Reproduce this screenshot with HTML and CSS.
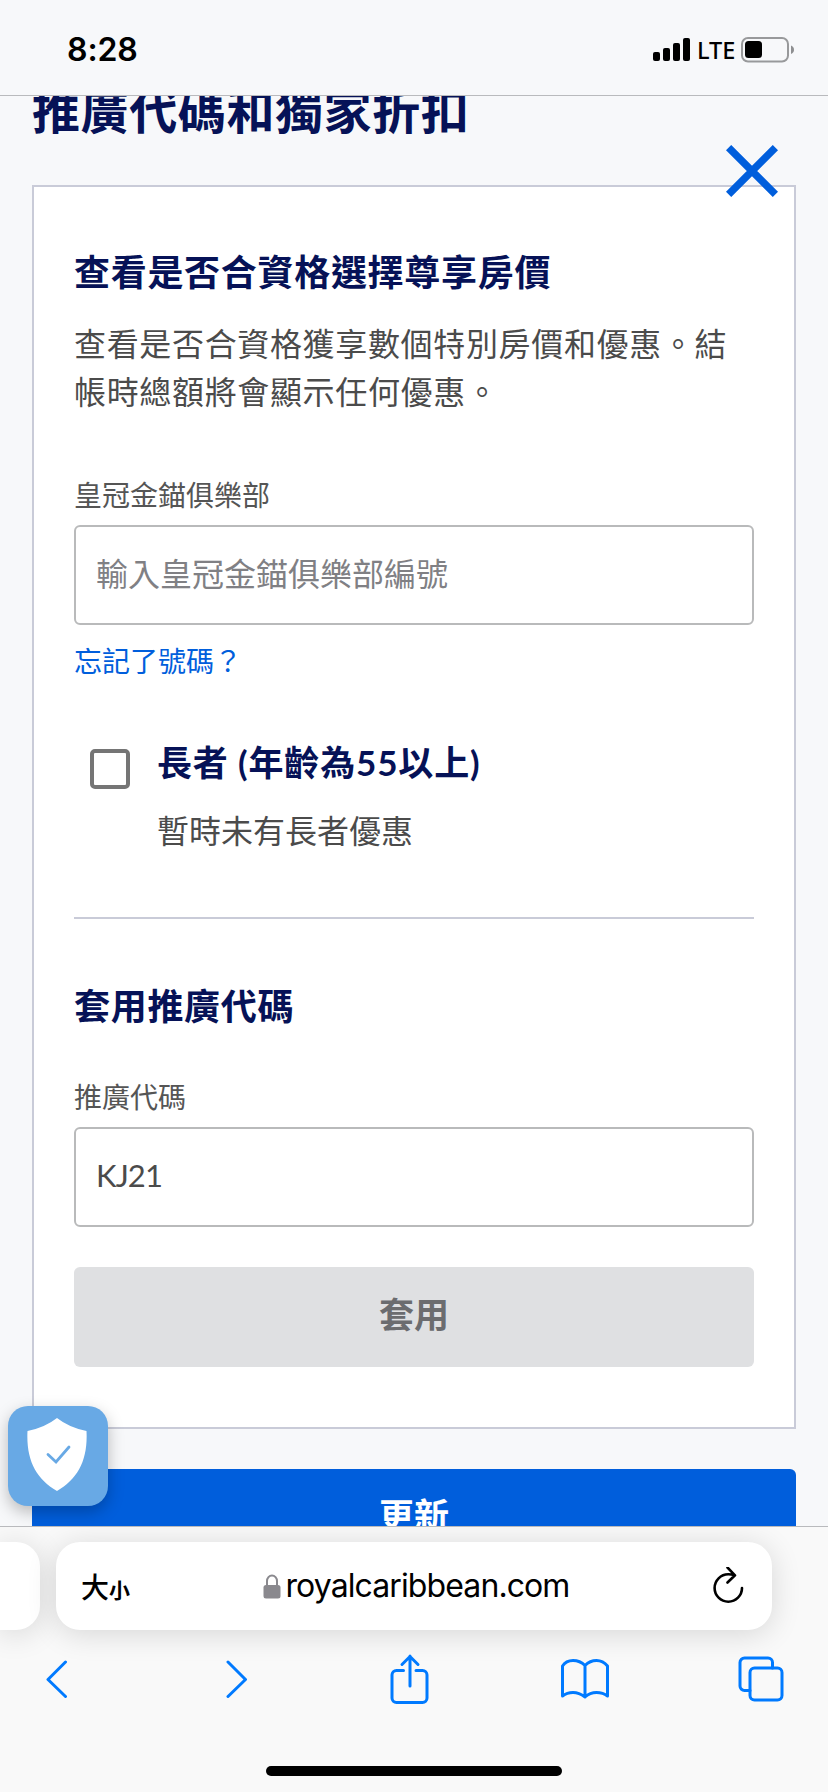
FILE: index.html
```html
<!DOCTYPE html>
<html lang="zh-Hant">
<head>
<meta charset="utf-8">
<title>推廣代碼和獨家折扣</title>
<link rel="stylesheet" href="styles.css">
</head>
<body>
<div class="screen">
  <header class="status">
    <span class="time">8:28</span>
    <div class="indicators">
      <svg class="signal" width="38" height="24" viewBox="0 0 38 24"><rect x="0" y="14" width="7" height="9" rx="2"/><rect x="10" y="10" width="7" height="13" rx="2"/><rect x="20" y="5" width="7" height="18" rx="2"/><rect x="30" y="0" width="7" height="23" rx="2"/></svg>
      <span class="network">LTE</span>
      <svg class="battery" width="54" height="26" viewBox="0 0 54 26"><rect x="1" y="1" width="46" height="23.500" rx="6" fill="none" stroke="#98999b" stroke-width="2"/><rect x="4" y="4" width="17" height="17" rx="3.500"/><path d="M50 8.500q3 1.200 3 4.200t-3 4.200z" fill="#8e8f91"/></svg>
    </div>
  </header>
  <main class="page">
    <h1 class="title">推廣代碼和獨家折扣</h1>
    <section class="card">
      <h2 class="heading">查看是否合資格選擇尊享房價</h2>
      <p class="intro">查看是否合資格獲享數個特別房價和優惠。結帳時總額將會顯示任何優惠。</p>
      <label class="label" for="club">皇冠金錨俱樂部</label>
      <input class="field" id="club" type="text" placeholder="輸入皇冠金錨俱樂部編號">
      <a class="link">忘記了號碼？</a>
      <div class="option">
        <span class="checkbox"></span>
        <div class="option-text">
          <h3 class="option-title">長者 (年齡為55以上)</h3>
          <p class="option-note">暫時未有長者優惠</p>
        </div>
      </div>
      <hr class="rule">
      <h2 class="heading">套用推廣代碼</h2>
      <label class="label label-code" for="code">推廣代碼</label>
      <input class="field field-code" id="code" type="text" value="KJ21">
      <button class="apply">套用</button>
    </section>
    <button class="update">更新</button>
    <svg class="close" width="52" height="52" viewBox="0 0 52 52"><path d="M2.600 2.600l46.800 46.800M49.400 2.600l-46.800 46.800" stroke="#005edc" stroke-width="7.400"/></svg>
    <div class="shield">
      <svg width="60" height="74" viewBox="0 0 60 74"><path d="M30 0Q42 9.500 59.500 13C61 42 51 61 30 73C9 61-1 42 .5 13Q18 9.500 30 0z" fill="#fff"/><path d="M21 36.500l8 7.500L42 29" fill="none" stroke="#68a9e5" stroke-width="2.800" stroke-linecap="round"/></svg>
    </div>
  </main>
  <footer class="browser">
    <div class="tabs">
      <div class="tab tab-previous"></div>
      <div class="tab tab-current">
        <span class="size"><span class="size-big">大</span><span class="size-small">小</span></span>
        <span class="address">
          <svg width="18" height="25" viewBox="0 0 18 25"><path d="M4 12V7a5 5.500 0 0 1 10 0v5" fill="none" stroke="#8a898e" stroke-width="2"/><rect x=".5" y="11" width="17" height="13.500" rx="2.500" fill="#8a898e"/></svg>
          <span class="domain">royalcaribbean.com</span>
        </span>
        <svg class="reload" width="32" height="38" viewBox="0 0 32 38" fill="none" stroke="#000" stroke-width="2.600" stroke-linecap="round" stroke-linejoin="round"><path d="M30 21A13.700 13.700 0 1 1 16.300 7.300Q19.500 7.300 22.500 8.300M15.500 .5l7.500 7.800-7.500 7.200"/></svg>
      </div>
    </div>
    <nav class="toolbar">
      <svg width="22" height="38" viewBox="0 0 22 38"><path d="M19.500 2L2 19.500 19.500 36.500"/></svg>
      <svg width="22" height="38" viewBox="0 0 22 38"><path d="M2 2l17.500 17.500L2 36.500"/></svg>
      <svg width="40" height="50" viewBox="0 0 40 50"><path d="M13.500 16.500H6.500a4.500 4.500 0 0 0-4.500 4.500v23a4.500 4.500 0 0 0 4.500 4.500h26a4.500 4.500 0 0 0 4.500-4.500V21a4.500 4.500 0 0 0-4.500-4.500H26M20 32V2M12 10.500L20 2.500l8 8"/></svg>
      <svg width="50" height="42" viewBox="0 0 50 42"><path d="M25 7.500Q20 2.500 13 2.500T2.500 8V38Q7 34.500 13 34.500T25 39Q30 34.500 36.500 34.500T47.500 38V8Q43 2.500 36.500 2.500T25 7.500zV39"/></svg>
      <svg width="46" height="46" viewBox="0 0 46 46"><rect x="12" y="12" width="32" height="32" rx="4.500"/><path d="M12 34.500H6.500A4.500 4.500 0 0 1 2 30V6.500A4.500 4.500 0 0 1 6.500 2H30a4.500 4.500 0 0 1 4.500 4.500V12"/></svg>
    </nav>
    <div class="home"></div>
  </footer>
</div>
</body>
</html>
```
FILE: styles.css
```css
* { box-sizing: border-box; margin: 0; padding: 0; }

body {
  font-family: "Noto Sans", "Noto Sans CJK TC", sans-serif;
  background: #f7f8fa;
}

.screen {
  width: 828px;
  height: 1792px;
  display: flex;
  flex-direction: column;
  overflow: hidden;
}

.status {
  height: 96px;
  flex: none;
  border-bottom: 1px solid #b9babd;
  display: flex;
  justify-content: space-between;
  align-items: center;
  padding: 4px 33px 0 67px;
}

.time { font: 600 32px/40px Inter, sans-serif; letter-spacing: -.1px; }
.indicators { display: flex; align-items: center; }
.signal { margin-right: 6px; }
.network { font: 500 23.5px/26px "Noto Sans", sans-serif; width: 42px; }
.battery { margin-left: 2px; }

.page {
  position: relative;
  height: 1430px;
  flex: none;
  padding: 0 32px;
  overflow: hidden;
}

.title {
  margin-top: -24px;
  height: 113px;
  color: #061257;
  font-size: 48px;
  line-height: 72px;
  letter-spacing: .6px;
  font-family: "Noto Sans CJK TC", sans-serif;
}

.card {
  width: 764px;
  height: 1244px;
  background: #fff;
  border: 2px solid #c9cbd8;
  padding: 58px 40px 0;
  display: flex;
  flex-direction: column;
}

.heading {
  color: #061257;
  font: 700 36px/50px "Noto Sans CJK TC", sans-serif;
  letter-spacing: .7px;
}

.intro {
  margin-top: 23px;
  color: #4b4b4b;
  font: 32px/48px "Noto Sans CJK TC", sans-serif;
  letter-spacing: .66px;
}

.label {
  margin-top: 60px;
  height: 51px;
  color: #555;
  font: 28px/40px "Noto Sans CJK TC", sans-serif;
}

.field {
  width: 680px;
  height: 100px;
  border: 2px solid #b9babb;
  border-radius: 6px;
  padding: 0 20px 6px;
  font: 32px "Noto Sans CJK TC", sans-serif;
  color: #4b4b4b;
}

.field::placeholder { color: #808084; opacity: 1; }

.link {
  margin-top: 15px;
  color: #005edc;
  font: 28px/40px "Noto Sans CJK TC", sans-serif;
}

.option {
  display: flex;
  margin-top: 57px;
  padding-left: 16px;
}

.checkbox {
  width: 40px;
  height: 40px;
  margin: 12px 27px 0 0;
  border: 4px solid #757575;
  border-radius: 5px;
}

.option-title {
  color: #061257;
  font: 700 35px/50px Lato, "Noto Sans CJK TC", sans-serif;
  letter-spacing: .85px;
}

.option-note {
  margin-top: 18px;
  color: #4b4b4b;
  font: 32px/48px "Noto Sans CJK TC", sans-serif;
}

.rule { margin: 64px 0 60px; border: 0; height: 2px; flex: none; background: #c9cbd8; }
.label-code { margin-top: 47px; }
.field-code { padding-bottom: 4px; font: 31px Lato, sans-serif; letter-spacing: -.9px; }

.apply,
.update {
  height: 100px;
  flex: none;
  border: 0;
  border-radius: 6px;
  font: 700 35px/50px "Noto Sans CJK TC", sans-serif;
}

.apply { margin-top: 40px; padding-bottom: 9px; background: #dfe0e2; color: #6b6c6f; }
.update { width: 764px; margin-top: 40px; padding-bottom: 10px; display: block; background: #005edc; color: #fff; }

.close { position: absolute; left: 726px; top: 49px; }

.shield {
  position: absolute;
  left: 8px;
  top: 1310px;
  width: 100px;
  height: 100px;
  border-radius: 20px;
  background: #68a9e5;
  box-shadow: 0 6px 16px rgba(0, 0, 0, .25);
  display: flex;
  justify-content: center;
  padding: 12px 2px 0 0;
}

.browser {
  flex: 1;
  border-top: 1px solid #b9babd;
  background: #f9f9f9;
  overflow: hidden;
}

.tabs { display: flex; gap: 16px; padding-top: 15px; }
.tab { height: 88px; background: #fff; box-shadow: 0 4px 30px rgba(0, 0, 0, .14); }
.tab-previous { width: 40px; border-radius: 0 24px 24px 0; }

.tab-current {
  width: 716px;
  border-radius: 24px;
  display: flex;
  align-items: center;
  justify-content: space-between;
  padding: 0 28px 0 25px;
}

.size { width: 54px; font-family: "Noto Sans CJK TC", sans-serif; font-weight: 700; display: flex; align-items: baseline; }
.size-big { font-size: 28px; font-weight: 500; }
.size-small { font-size: 21px; }
.address { display: flex; align-items: center; gap: 4px; margin-right: 14px; }
.domain { font: 32px/40px Inter, sans-serif; letter-spacing: -.9px; }

.toolbar {
  display: grid;
  grid-template-columns: 180px 164px 170px 178px 46px;
  align-items: center;
  height: 50px;
  margin-top: 24px;
  padding-left: 46px;
}

.toolbar svg { fill: none; stroke: #007aff; stroke-width: 3; stroke-linecap: round; stroke-linejoin: round; }

.home { width: 296px; height: 10px; margin: 62px auto 0; border-radius: 5px; background: #000; }
```
